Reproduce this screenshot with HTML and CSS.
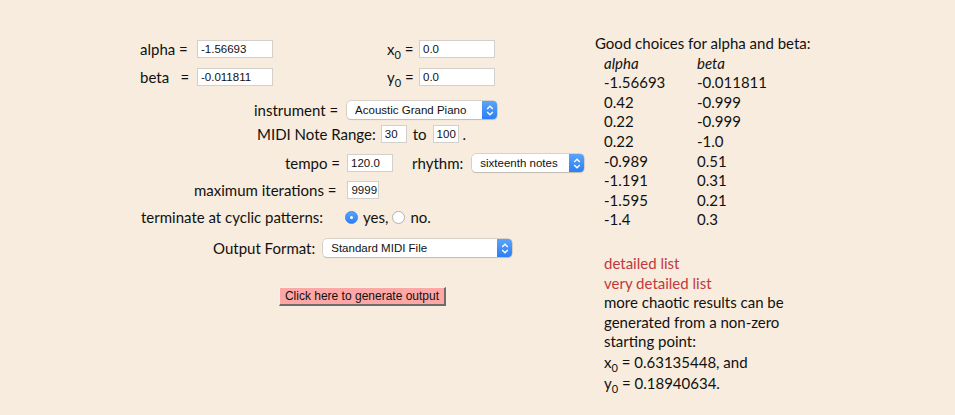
FILE: index.html
```html
<!DOCTYPE html>
<html>
<head>
<meta charset="utf-8">
<link rel="stylesheet" href="styles.css">
</head>
<body>
<div class="page">
  <div class="left">
    <div class="row r-top">
      <span class="lbl lbl-alpha">alpha =</span>
      <span class="inp w76">-1.56693</span>
      <span class="lbl lbl-x">x<sub>0</sub> =</span>
      <span class="inp w76">0.0</span>
    </div>
    <div class="row r-beta">
      <span class="lbl lbl-alpha">beta &nbsp;&nbsp;=</span>
      <span class="inp w76">-0.011811</span>
      <span class="lbl lbl-x">y<sub>0</sub> =</span>
      <span class="inp w76">0.0</span>
    </div>
    <div class="row r-instr">
      <span class="lbl">instrument =</span>
      <span class="sel w150"><span class="sel-text">Acoustic Grand Piano</span><span class="sel-btn"><svg width="8" height="11" viewBox="0 0 8 11"><path d="M1.2 4 L4 1.3 L6.8 4 M1.2 7 L4 9.7 L6.8 7" fill="none" stroke="#fff" stroke-width="1.4"/></svg></span></span>
    </div>
    <div class="row r-midi">
      <span class="lbl">MIDI Note Range:</span>
      <span class="inp w26 m7">30</span>
      <span class="lbl to">to</span>
      <span class="inp w26">100</span>
      <span class="lbl dot">.</span>
    </div>
    <div class="row r-tempo">
      <span class="lbl">tempo =</span>
      <span class="inp w46">120.0</span>
      <span class="lbl rh">rhythm:</span>
      <span class="sel w112"><span class="sel-text">sixteenth notes</span><span class="sel-btn"><svg width="8" height="11" viewBox="0 0 8 11"><path d="M1.2 4 L4 1.3 L6.8 4 M1.2 7 L4 9.7 L6.8 7" fill="none" stroke="#fff" stroke-width="1.4"/></svg></span></span>
    </div>
    <div class="row r-max">
      <span class="lbl">maximum iterations =</span>
      <span class="inp w32">9999</span>
    </div>
    <div class="row r-term">
      <span class="lbl">terminate at cyclic patterns:</span>
      <span class="radio on"></span>
      <span class="lbl yes">yes,</span>
      <span class="radio"></span>
      <span class="lbl no">no.</span>
    </div>
    <div class="row r-out">
      <span class="lbl">Output Format:</span>
      <span class="sel w189"><span class="sel-text">Standard MIDI File</span><span class="sel-btn"><svg width="8" height="11" viewBox="0 0 8 11"><path d="M1.2 4 L4 1.3 L6.8 4 M1.2 7 L4 9.7 L6.8 7" fill="none" stroke="#fff" stroke-width="1.4"/></svg></span></span>
    </div>
    <div class="row r-btn">
      <span class="btn">Click here to generate output</span>
    </div>
  </div>
  <div class="right">
    <div class="line">Good choices for alpha and beta:</div>
    <div class="tbl">
      <div class="th">alpha</div><div class="th">beta</div>
      <div>-1.56693</div><div>-0.011811</div>
      <div>0.42</div><div>-0.999</div>
      <div>0.22</div><div>-0.999</div>
      <div>0.22</div><div>-1.0</div>
      <div>-0.989</div><div>0.51</div>
      <div>-1.191</div><div>0.31</div>
      <div>-1.595</div><div>0.21</div>
      <div>-1.4</div><div>0.3</div>
    </div>
    <div class="notes">
      <div class="link">detailed list</div>
      <div class="link">very detailed list</div>
      <div>more chaotic results can be<br>generated from a non-zero<br>starting point:</div>
      <div class="sub-line">x<sub>0</sub> = 0.63135448, and</div>
      <div class="sub-line">y<sub>0</sub> = 0.18940634.</div>
    </div>
  </div>
</div>
</body>
</html>
```

FILE: styles.css
```css
html, body {
  margin: 0;
  padding: 0;
  background: #f7ecdd;
}
body {
  font-family: "Lato", "Open Sans", sans-serif;
  font-size: 15px;
  color: #111;
  width: 955px;
  height: 415px;
  overflow: hidden;
}
.page {
  display: flex;
}
.left {
  width: 595px;
  flex: none;
}
.row {
  display: flex;
  align-items: center;
  height: 18px;
  white-space: nowrap;
}
.lbl sub, .line sub, .sub-line sub {
  font-size: 11px;
  vertical-align: -4px;
  line-height: 0;
}
.r-top { margin-top: 40px; padding-left: 140px; }
.r-beta { margin-top: 10px; padding-left: 140px; }
.lbl-alpha { width: 57px; }
.lbl-x { margin-left: 114px; width: 32px; }
.r-instr { margin-top: 15px; padding-left: 254px; }
.r-instr .lbl { margin-right: 9px; }
.r-midi { margin-top: 6px; padding-left: 257px; }
.r-midi .m7 { margin-left: 5px; }
.r-midi .to { margin: 0 6px 0 6px; }
.r-midi .dot { margin-left: 4px; }
.r-tempo { margin-top: 11px; padding-left: 285px; }
.r-tempo .lbl { margin-right: 7px; }
.r-tempo .rh { margin-left: 19px; margin-right: 9px; }
.r-max { margin-top: 9px; padding-left: 194px; }
.r-max .lbl { margin-right: 11px; }
.r-term { margin-top: 9px; padding-left: 141px; }
.r-term .radio { margin-left: 22px; }
.r-term .yes { margin-left: 5px; }
.r-term .yes + .radio { margin-left: 4px; }
.r-term .no { margin-left: 5px; }
.r-out { margin-top: 13px; padding-left: 213px; }
.r-out .lbl { margin-right: 8px; }
.r-btn { margin-top: 30px; padding-left: 279px; height: 19px; }

.inp {
  box-sizing: border-box;
  height: 18px;
  background: #fff;
  border: 1px solid #d3d0cb;
  font-family: "Liberation Sans", Arial, sans-serif;
  font-size: 11.5px;
  line-height: 16px;
  padding-left: 3px;
  color: #111;
  display: inline-block;
}
.w76 { width: 76px; }
.w26 { width: 26px; }
.w46 { width: 46px; }
.w32 { width: 32px; }

.sel {
  box-sizing: border-box;
  height: 18px;
  display: inline-flex;
  align-items: stretch;
  background: #fff;
  border-radius: 4px;
  box-shadow: 0 0 0 0.5px #b9b6b2, 0 1px 1px rgba(0,0,0,0.18);
  font-family: "Liberation Sans", Arial, sans-serif;
  font-size: 11.5px;
  color: #111;
}
.sel-text {
  flex: 1;
  line-height: 18px;
  padding-left: 8px;
}
.sel-btn {
  width: 15px;
  background: linear-gradient(#5aa4f9, #2c7ff5);
  border-radius: 0 4px 4px 0;
  display: flex;
  align-items: center;
  justify-content: center;
}
.w150 { width: 150px; }
.w112 { width: 112px; }
.w189 { width: 189px; }

.radio {
  box-sizing: border-box;
  width: 13px;
  height: 13px;
  border-radius: 50%;
  background: #fff;
  border: 1px solid #b5b2ae;
  display: inline-block;
  position: relative;
}
.radio.on {
  background: linear-gradient(#5aa4f9, #2c7ff5);
  border-color: #3a84f0;
}
.radio.on::after {
  content: "";
  position: absolute;
  left: 4px;
  top: 4px;
  width: 3px;
  height: 3px;
  border-radius: 50%;
  background: #fff;
}

.btn {
  box-sizing: border-box;
  display: inline-block;
  height: 19px;
  width: 167px;
  background: #fda8a6;
  border-style: solid;
  border-width: 1px 2px 2px 1px;
  border-color: #f3f1ee #6f6d6b #6f6d6b #f3f1ee;
  font-family: "Liberation Sans", Arial, sans-serif;
  font-size: 12px;
  line-height: 16px;
  text-align: center;
  color: #111;
}

.right {
  padding-top: 34px;
  line-height: 19.6px;
}
.tbl {
  display: grid;
  grid-template-columns: 93px auto;
  padding-left: 9px;
}
.th { font-style: italic; }
.notes {
  padding-left: 9px;
  margin-top: 24px;
}
.link {
  color: #c2393c;
}
.sub-line { line-height: 21px; }
```
